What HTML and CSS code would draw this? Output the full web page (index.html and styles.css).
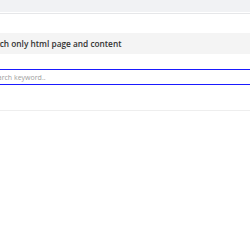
FILE: index.html
```html
<!DOCTYPE html>
<html lang="en">

<head>
    <meta charset="UTF-8">
    <meta name="viewport" content="width=device-width, initial-scale=1.0">
    <title>Search</title>
    <link rel="stylesheet" href="styles.css">
</head>

<body>
    <div class="topbar"></div>
    <div class="topline"></div>

    <div class="page">
        <div class="panel-title">Search only html page and content</div>

        <form class="search-form">
            <input type="text" class="search-input" placeholder="Search keyword..">
        </form>
    </div>

    <div class="bottomline"></div>
</body>

</html>
```

FILE: styles.css
```css
body {
    font-family: "Open Sans", "Noto Sans", sans-serif;
    margin: 0;
    padding: 0;
    background: #fff;
    overflow: hidden;
}

.topbar {
    height: 12px;
    background: #f1f2f4;
}

.topline {
    height: 1px;
    margin-top: 1px;
    background: #e6e7e9;
}

.page {
    margin: 0 -30px 0 -26px;
    padding-top: 19px;
}

.panel-title {
    height: 21px;
    line-height: 21px;
    padding-left: 8px;
    background: #f4f4f4;
    color: #333;
    font-size: 8.3px;
    font-weight: 600;
    white-space: nowrap;
}

.search-form {
    margin: 15px 0 0 11px;
}

.search-input {
    display: block;
    width: 100%;
    height: 16px;
    padding: 0 4px;
    border: 1px solid #1a1aff;
    border-radius: 0;
    box-sizing: border-box;
    font-family: inherit;
    font-size: 7px;
    outline: none;
}

.search-input::placeholder {
    color: #a0a0a0;
}

.bottomline {
    height: 1px;
    margin-top: 25px;
    background: #eeeeee;
}
```
